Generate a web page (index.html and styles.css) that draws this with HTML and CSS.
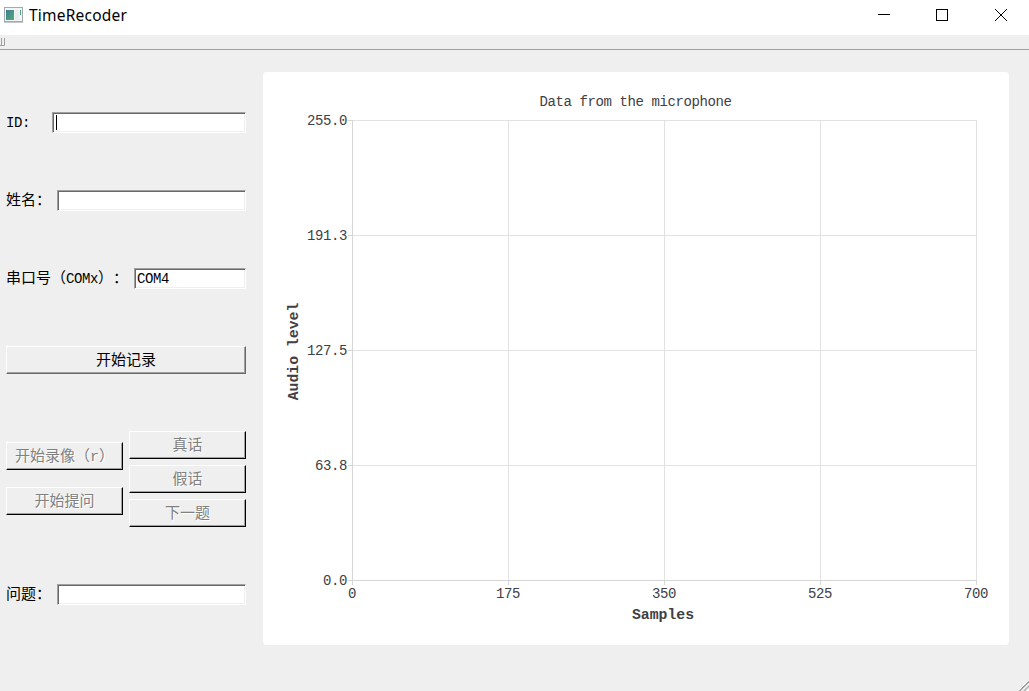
FILE: index.html
```html
<!DOCTYPE html>
<html lang="zh-CN">
<head>
<meta charset="utf-8">
<title>TimeRecoder</title>
<link rel="stylesheet" href="styles.css">
</head>
<body>
<div class="window">
  <header class="titlebar">
    <svg class="app-icon" width="19" height="16" viewBox="0 0 19 16">
      <defs><linearGradient id="app" x1="0" y1="0" x2="1" y2="1"><stop offset="0" stop-color="#3f7c9c"/><stop offset="1" stop-color="#4fae6c"/></linearGradient></defs>
      <rect x=".5" y=".5" width="18" height="14" fill="#f4f5f6" stroke="#a3a9ae"/>
      <rect x="2" y="3" width="8" height="10" fill="url(#app)"/>
      <rect x="11" y="3" width="4" height="10" fill="#e9ecee"/>
      <rect x="16" y="3" width="1" height="5" fill="#4aa477"/>
      <path d="M0 15.500H19" stroke="#c4c8ca"/>
    </svg>
    <span class="app-title">TimeRecoder</span>
    <svg class="controls" width="151" height="30" viewBox="0 0 151 30" fill="none" stroke="#000">
      <path shape-rendering="crispEdges" d="M0 14.500H12M58.500 9.500H69.500V20.500H58.500Z"/>
      <path d="M117 9L129 21M129 9L117 21"/>
    </svg>
  </header>
  <div class="toolbar">
    <svg width="6" height="8" viewBox="0 0 6 8" fill="none" stroke="#a0a0a0"><path d="M1.500 0V7M4.500 0V7.500H0"/></svg>
  </div>
  <main class="content">
    <section class="panel">
      <div class="row"><label class="label-id">ID:</label><div class="field"><i class="caret"></i></div></div>
      <div class="row"><label class="label-short">姓名：</label><div class="field"></div></div>
      <div class="row"><label class="label-long">串口号（<span class="latin">COMx</span>）：</label><div class="field">COM4</div></div>
      <button class="btn">开始记录</button>
      <div class="groups">
        <div class="group left">
          <button class="btn off">开始录像（r）</button>
          <button class="btn off">开始提问</button>
        </div>
        <div class="group">
          <button class="btn off">真话</button>
          <button class="btn off">假话</button>
          <button class="btn off">下一题</button>
        </div>
      </div>
      <div class="row"><label class="label-short">问题：</label><div class="field"></div></div>
    </section>
    <section class="card">
      <svg class="chart" width="746" height="573" viewBox="263 72 746 573">
        <path class="grid" d="M352 120.500H977M352 235.500H977M352 350.500H977M352 465.500H977M508.500 120V580M664.500 120V580M820.500 120V580M976.500 120V580"/>
        <path class="axis" d="M352.500 120V585M348 580.500H977M348 120.500H352M348 235.500H352M348 350.500H352M348 465.500H352M508.500 580V585M664.500 580V585M820.500 580V585M976.500 580V585"/>
        <g text-anchor="middle">
          <text x="635.500" y="106">Data from the microphone</text>
          <text x="352" y="598">0</text>
          <text x="508" y="598">175</text>
          <text x="664" y="598">350</text>
          <text x="820" y="598">525</text>
          <text x="976" y="598">700</text>
          <text class="bold" x="663" y="619">Samples</text>
          <text class="bold" transform="translate(298 351.500) rotate(-90)">Audio level</text>
        </g>
        <g text-anchor="end">
          <text x="347" y="125">255.0</text>
          <text x="347" y="240">191.3</text>
          <text x="347" y="355">127.5</text>
          <text x="347" y="470">63.8</text>
          <text x="347" y="585">0.0</text>
        </g>
      </svg>
    </section>
  </main>
  <svg class="grip" width="10" height="10" viewBox="0 0 10 10" fill="none"><path d="M0 9L9 0M4 10L10 4M8 10L10 8" stroke="#fff"/><path d="M0 10L10 0M1 10L10 1M4 10.500L10.500 4M5 10.500L10.500 5" stroke="#a0a0a0"/></svg>
</div>
</body>
</html>
```
FILE: styles.css
```css
* { box-sizing: border-box; }
body { margin: 0; }
.window {
  position: relative;
  width: 1029px;
  height: 691px;
  overflow: hidden;
  background: #efefef;
  color: #000;
  font: 15px/17px "Liberation Mono", "Noto Sans CJK SC", monospace;
  text-spacing-trim: space-all;
}
.titlebar {
  display: flex;
  height: 35px;
  padding-left: 4px;
  background: #fff;
}
.app-icon { margin-top: 7px; }
.app-title {
  margin-left: 6px;
  font: 15.5px/31px "Noto Sans", sans-serif;
  letter-spacing: .22px;
}
.controls { margin-left: auto; }
.toolbar {
  display: flex;
  height: 15px;
  padding-top: 3px;
  border-bottom: 1px solid #a0a0a0;
}
.content {
  display: flex;
  gap: 17px;
  padding: 22px 20px 0 6px;
}
.panel {
  display: flex;
  flex-direction: column;
  width: 240px;
  padding-top: 40px;
}
.row {
  display: flex;
  height: 21px;
  margin-bottom: 57px;
}
.row label {
  flex: none;
  line-height: 23px;
  white-space: nowrap;
}
.row .label-id { width: 46px; font-size: 14px; letter-spacing: -.4px; }
.row .label-short { width: 51px; }
.row .label-long { width: 128px; }
.latin { font-size: 14px; letter-spacing: -.4px; }
.field {
  flex: 1;
  padding: 0 2px;
  border: 1px solid;
  border-color: #a0a0a0 #fff #fff #a0a0a0;
  background: #fff;
  box-shadow: inset 1px 1px #696969, inset -1px -1px #efefef;
  font-size: 14px;
  letter-spacing: -.4px;
  line-height: 21px;
}
.caret {
  display: block;
  width: 1px;
  height: 15px;
  margin: 2px 0 0 1px;
  background: #000;
}
.btn {
  display: block;
  width: 100%;
  height: 28px;
  padding: 3px 0 0;
  border: 1px solid;
  border-color: #fff #696969 #696969 #fff;
  background: #efefef;
  box-shadow: inset -1px -1px #a0a0a0;
  color: #000;
  font: 15px/23px "Liberation Mono", "Noto Sans CJK SC", monospace;
  text-spacing-trim: space-all;
}
.off {
  border-right-color: #000;
  border-bottom-color: #000;
  color: #808080;
  text-shadow: 1px 1px #fff;
}
.groups {
  display: flex;
  gap: 6px;
  margin: 57px 0;
}
.group {
  display: grid;
  flex: 1;
  align-content: start;
  gap: 6px;
}
.left { gap: 17px; padding-top: 11px; }
.card {
  width: 746px;
  height: 573px;
  border-radius: 4px;
  background: #fff;
}
.chart { display: block; }
.chart text {
  fill: #404044;
  font: 14px "Liberation Mono", monospace;
  letter-spacing: -.4px;
}
.chart .bold {
  font-size: 14.8px;
  font-weight: bold;
  letter-spacing: 0;
}
.grid { stroke: #e2e2e2; }
.axis { stroke: #d6d6d6; fill: none; }
.grip {
  position: absolute;
  right: 0;
  bottom: 0;
}
```
